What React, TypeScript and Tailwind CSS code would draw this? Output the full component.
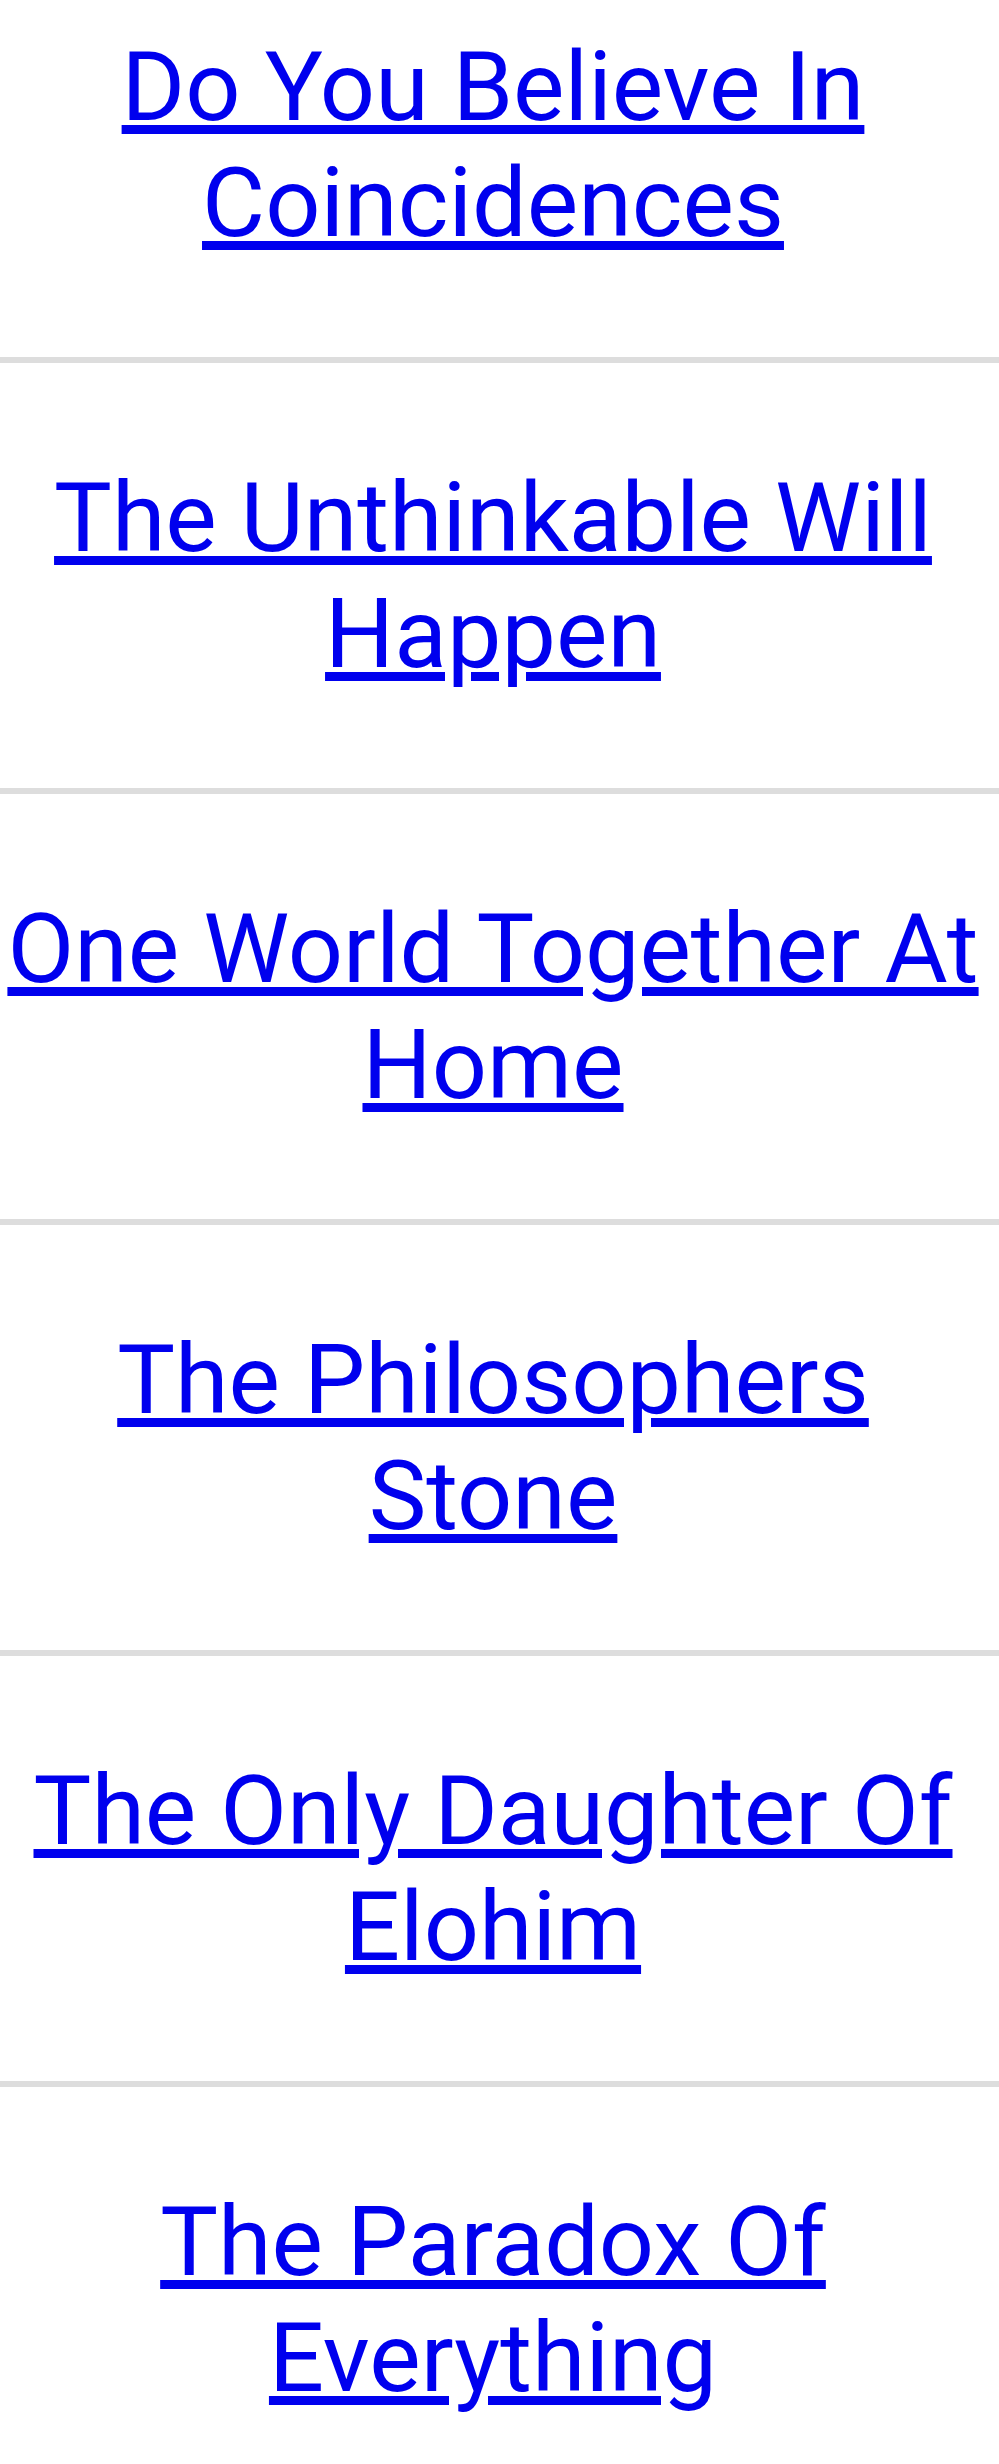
const titles = [
  "Do You Believe In Coincidences",
  "The Unthinkable Will Happen",
  "One World Together At Home",
  "The Philosophers Stone",
  "The Only Daughter Of Elohim",
  "The Paradox Of Everything",
];

function Entry({ title, first }: { title: string; first: boolean }) {
  return (
    <div>
      <h2
        className={`pr-[13px] pb-[96px] text-center text-[97px] leading-[116px] font-normal ${
          first ? "pt-[29px]" : "pt-[97px]"
        }`}
      >
        <a
          href="#"
          className="text-[#0000ee] underline decoration-[length:9px] underline-offset-[5px]"
        >
          {title}
        </a>
      </h2>
      <div className="h-[6px] bg-[#dddddd]" />
    </div>
  );
}

export default function App() {
  return (
    <main className="min-h-screen w-[999px] bg-white font-['Roboto',sans-serif]">
      {titles.map((t, i) => (
        <Entry key={t} title={t} first={i === 0} />
      ))}
    </main>
  );
}
